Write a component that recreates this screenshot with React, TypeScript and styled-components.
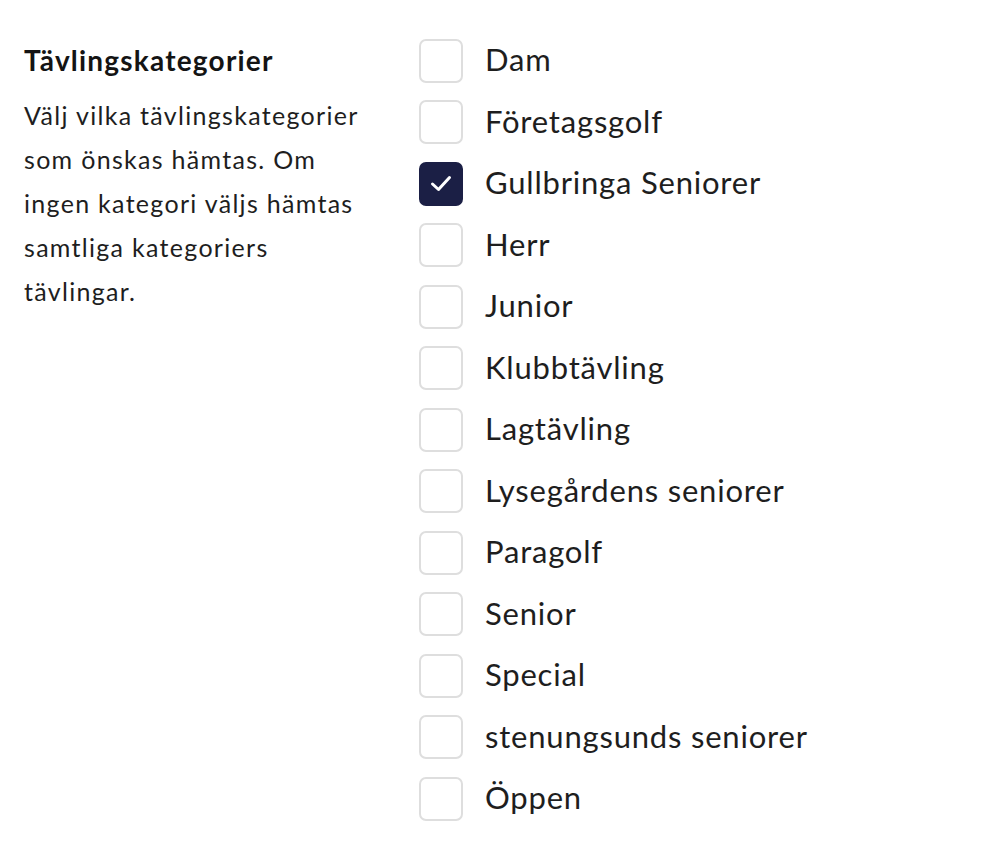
import React from 'react';
import styled, {createGlobalStyle} from "styled-components";

const GlobalStyle = createGlobalStyle`
    body {
        margin: 0;
        background: #ffffff;
        font-family: Lato, "Open Sans", sans-serif;
        color: #1e1e1e;
    }
`

const categories = [
    {name: "Dam", checked: false},
    {name: "Företagsgolf", checked: false},
    {name: "Gullbringa Seniorer", checked: true},
    {name: "Herr", checked: false},
    {name: "Junior", checked: false},
    {name: "Klubbtävling", checked: false},
    {name: "Lagtävling", checked: false},
    {name: "Lysegårdens seniorer", checked: false},
    {name: "Paragolf", checked: false},
    {name: "Senior", checked: false},
    {name: "Special", checked: false},
    {name: "stenungsunds seniorer", checked: false},
    {name: "Öppen", checked: false},
];

export default function App() {
    return (
        <>
            <GlobalStyle/>
            <Section>
                <Intro>
                    <Title>Tävlingskategorier</Title>
                    <Description>
                        Välj vilka tävlingskategorier som önskas hämtas. Om ingen kategori väljs hämtas
                        samtliga kategoriers tävlingar.
                    </Description>
                </Intro>
                <List>
                    {categories.map((c) => (
                        <Row key={c.name}>
                            <Box checked={c.checked}>
                                {c.checked && (
                                    <svg width="22" height="17" viewBox="0 0 22 17" fill="none">
                                        <path d="M2.5 9l6 5.5L19.5 2.5" stroke="#fff" strokeWidth="3"
                                              strokeLinecap="round" strokeLinejoin="round"/>
                                    </svg>
                                )}
                            </Box>
                            <Label>{c.name}</Label>
                        </Row>
                    ))}
                </List>
            </Section>
        </>
    );
}

const Section = styled.div`
    display: flex;
    align-items: flex-start;
    padding: 30px 24px;
`

const Intro = styled.div`
    width: 348px;
    margin-right: 47px;
`

const Title = styled.h2`
    margin: 10px 0 13px;
    font-size: 28px;
    line-height: 40px;
    letter-spacing: 1.2px;
    font-weight: 700;
    color: #141414;
`

const Description = styled.p`
    margin: 0;
    font-size: 25px;
    line-height: 44px;
    letter-spacing: 1.3px;
    color: #1e1e1e;
`

const List = styled.div`
    display: flex;
    flex-direction: column;
`

const Row = styled.label`
    display: flex;
    align-items: center;
    height: 61.5px;
    gap: 22px;
`

const Box = styled.span<{ checked: boolean }>`
    box-sizing: border-box;
    width: 44px;
    height: 44px;
    border-radius: 7px;
    display: flex;
    align-items: center;
    justify-content: center;
    border: 2px solid ${({checked}) => checked ? "#1b1f45" : "#dedede"};
    background: ${({checked}) => checked ? "#1b1f45" : "#ffffff"};
`

const Label = styled.span`
    font-size: 31px;
    letter-spacing: 0.8px;
    line-height: 1;
    margin-bottom: 2px;
    color: #1e1e1e;
`
